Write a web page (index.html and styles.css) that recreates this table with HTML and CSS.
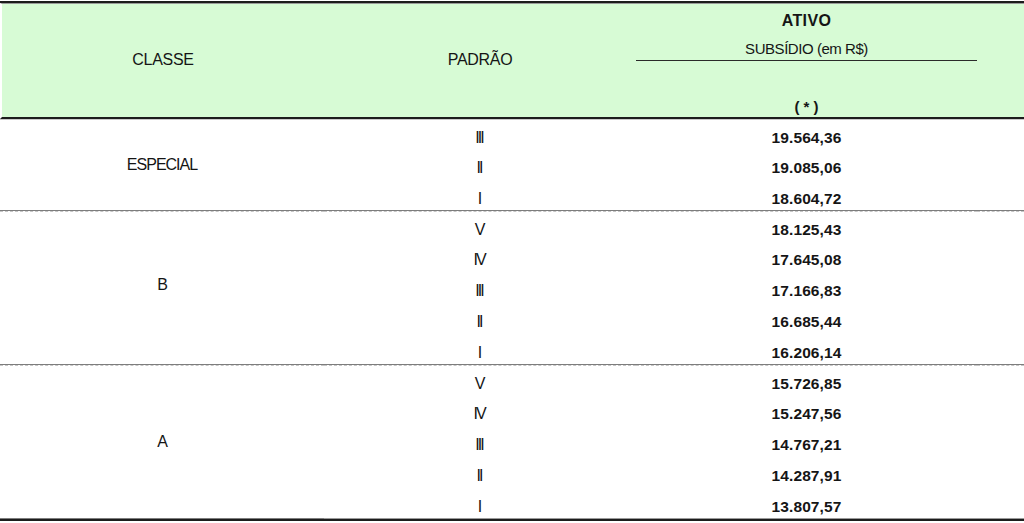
FILE: index.html
```html
<!DOCTYPE html>
<html lang="pt-BR">
<head>
<meta charset="utf-8">
<title>Subsídio</title>
<link rel="stylesheet" href="styles.css">
</head>
<body>
<table class="tbl">
  <colgroup>
    <col class="c1"><col class="c2"><col class="c3"><col class="c4">
  </colgroup>
  <thead>
    <tr>
      <th rowspan="3" class="h-classe">CLASSE</th>
      <th rowspan="3" class="h-padrao">PADRÃO</th>
      <th class="h-ativo">ATIVO</th>
      <th rowspan="3" class="h-empty"></th>
    </tr>
    <tr><th class="h-sub">SUBSÍDIO (em R$)</th></tr>
    <tr><th class="h-star">( * )</th></tr>
  </thead>
  <tbody>
    <tr class="first"><td rowspan="3" class="cls">ESPECIAL</td><td class="pad">III</td><td class="val">19.564,36</td><td></td></tr>
    <tr><td class="pad">II</td><td class="val">19.085,06</td><td></td></tr>
    <tr class="last"><td class="pad">I</td><td class="val">18.604,72</td><td></td></tr>

    <tr class="first"><td rowspan="5" class="cls cls-b">B</td><td class="pad">V</td><td class="val">18.125,43</td><td></td></tr>
    <tr><td class="pad">IV</td><td class="val">17.645,08</td><td></td></tr>
    <tr><td class="pad">III</td><td class="val">17.166,83</td><td></td></tr>
    <tr><td class="pad">II</td><td class="val">16.685,44</td><td></td></tr>
    <tr class="last"><td class="pad">I</td><td class="val">16.206,14</td><td></td></tr>

    <tr class="first"><td rowspan="5" class="cls">A</td><td class="pad">V</td><td class="val">15.726,85</td><td></td></tr>
    <tr><td class="pad">IV</td><td class="val">15.247,56</td><td></td></tr>
    <tr><td class="pad">III</td><td class="val">14.767,21</td><td></td></tr>
    <tr><td class="pad">II</td><td class="val">14.287,91</td><td></td></tr>
    <tr class="last end"><td class="pad">I</td><td class="val">13.807,57</td><td></td></tr>
  </tbody>
</table>
</body>
</html>
```

FILE: styles.css
```css
html, body {
  margin: 0;
  padding: 0;
  background: #ffffff;
}
body {
  padding-top: 1px;
  font-family: "Liberation Sans", Arial, sans-serif;
  color: #151515;
}
.tbl {
  width: 1024px;
  table-layout: fixed;
  border-collapse: separate;
  border-spacing: 0;
  border-top: 2px solid #1c1c1c;
  border-bottom: 2px solid #1c1c1c;
}
.c1 { width: 324px; }
.c2 { width: 312px; }
.c3 { width: 341px; }
.c4 { width: 47px; }

th, td {
  padding: 0;
  text-align: center;
  font-size: 16px;
  line-height: 18px;
  font-weight: normal;
}

thead th {
  background: #d7fbd5;
  vertical-align: middle;
}
thead tr:first-child th {
  border-top: 1px solid #9a9a9a;
}
.h-classe {
  border-left: 2px solid #ffffff;
  letter-spacing: -0.3px;
  padding-bottom: 1px;
}
.h-padrao {
  letter-spacing: -0.3px;
  padding-bottom: 1px;
}
.h-classe, .h-padrao, .h-empty, .h-star {
  border-bottom: 2px solid #1c1c1c;
}
.h-ativo {
  height: 24px;
  font-weight: bold;
  letter-spacing: 0.4px;
  padding-top: 5px;
}
.h-sub {
  height: 23px;
  font-size: 15px;
  letter-spacing: -0.45px;
  padding-top: 4px;
  border-bottom: 1px solid #2a2a2a;
}
.h-star {
  height: 55px;
  vertical-align: bottom;
  font-weight: bold;
  font-size: 15px;
  padding-bottom: 1px;
}

tbody td {
  height: 30.8px;
  padding-top: 9px;
  box-sizing: border-box;
  vertical-align: top;
}
tbody tr:first-child td {
  border-top: 1px solid #c9c9c9;
}
tr.first td {
  border-top: 1px dashed #c6c6c6;
}
tr.last td, td.cls {
  border-bottom: 1px solid #7d7d7d;
}
tr.end td {
  border-bottom: 1px solid #9a9a9a;
}
td.cls {
  vertical-align: middle;
  padding-top: 0;
  letter-spacing: -1px;
}
td.cls-b {
  padding-bottom: 6px;
}
td.pad {
  letter-spacing: -2px;
  padding-right: 2px;
}
td.val {
  font-weight: bold;
  font-size: 15.5px;
  letter-spacing: 0.1px;
}
```
